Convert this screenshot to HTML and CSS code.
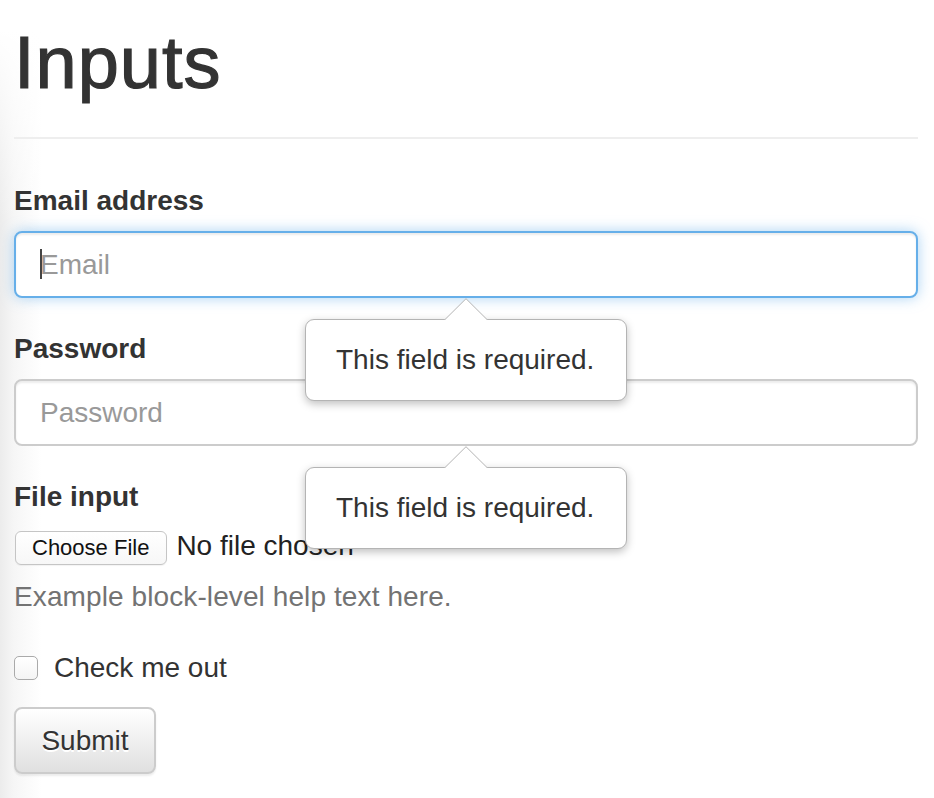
FILE: index.html
```html
<!DOCTYPE html>
<html lang="en">
<head>
<meta charset="utf-8">
<title>Inputs</title>
<link rel="stylesheet" href="styles.css">
</head>
<body>
<div class="page">
  <h1 class="title">Inputs</h1>
  <hr class="divider">
  <form class="form">
    <div class="form-group">
      <label class="label" for="email">Email address</label>
      <div class="field">
        <input class="control control-focus" id="email" type="email" placeholder="Email">
        <span class="caret"></span>
        <div class="bubble">
          <svg class="bubble-arrow" width="44" height="22" viewBox="0 0 44 22"><path d="M0.5 22 L22 0.7 L43.5 22" fill="#fff" stroke="#b4b4b4" stroke-width="1"/></svg>
          <span class="bubble-text">This field is required.</span>
        </div>
      </div>
    </div>
    <div class="form-group">
      <label class="label" for="password">Password</label>
      <div class="field">
        <input class="control" id="password" type="password" placeholder="Password">
        <div class="bubble">
          <svg class="bubble-arrow" width="44" height="22" viewBox="0 0 44 22"><path d="M0.5 22 L22 0.7 L43.5 22" fill="#fff" stroke="#b4b4b4" stroke-width="1"/></svg>
          <span class="bubble-text">This field is required.</span>
        </div>
      </div>
    </div>
    <div class="form-group">
      <label class="label">File input</label>
      <div class="file-row">
        <button type="button" class="file-btn">Choose File</button>
        <span class="file-name">No file chosen</span>
      </div>
      <p class="help">Example block-level help text here.</p>
    </div>
    <div class="check">
      <span class="check-box"></span>
      <span class="check-text">Check me out</span>
    </div>
    <button type="button" class="submit">Submit</button>
  </form>
</div>
</body>
</html>
```
FILE: styles.css
```css
html, body {
  margin: 0;
  padding: 0;
}
body {
  font-family: "Liberation Sans", Arial, sans-serif;
  color: #333;
  background:
    linear-gradient(to bottom, #fff 30px, rgba(255,255,255,0) 220px) no-repeat,
    linear-gradient(to right, #ececec 0px, #f6f6f6 14px, #fff 42px);
  background-size: 100% 220px, 100% 100%;
  min-height: 798px;
}
.page {
  padding: 0 16px 0 14px;
}
.title {
  margin: 22px 0 0 0;
  font-size: 74px;
  line-height: 81px;
  font-weight: normal;
  color: #333;
  letter-spacing: 1px;
  -webkit-text-stroke: 1.2px #333;
}
.divider {
  margin: 34px 0 0 0;
  border: 0;
  border-top: 2px solid #eee;
  height: 0;
}
.form {
  padding-top: 42px;
}
.form-group {
  margin-bottom: 31px;
}
.label {
  display: block;
  font-size: 28px;
  line-height: 40px;
  font-weight: bold;
  margin-bottom: 10px;
}
.field {
  position: relative;
}
.control {
  display: block;
  box-sizing: border-box;
  width: 100%;
  height: 67px;
  margin: 0;
  padding: 0 24px;
  font-family: "Liberation Sans", Arial, sans-serif;
  font-size: 28px;
  color: #555;
  background: #fff;
  border: 2px solid #ccc;
  border-radius: 8px;
  box-shadow: inset 0 2px 2px rgba(0,0,0,.075);
  outline: none;
}
.control::placeholder {
  color: #999;
}
.control-focus {
  border-color: #66afe9;
  box-shadow: inset 0 2px 2px rgba(0,0,0,.075), 0 0 14px rgba(102,175,233,.55);
}
.caret {
  position: absolute;
  left: 26px;
  top: 18px;
  width: 2px;
  height: 30px;
  background: #444;
}
.bubble {
  position: absolute;
  z-index: 5;
  left: 291px;
  top: 88px;
  box-sizing: border-box;
  width: 322px;
  height: 82px;
  padding: 0 30px;
  display: flex;
  align-items: center;
  background: #fff;
  border: 1px solid #b4b4b4;
  border-radius: 9px;
  box-shadow: 0 3px 9px rgba(0,0,0,.25);
}
.bubble-arrow {
  position: absolute;
  left: 138px;
  top: -22px;
  display: block;
}
.bubble-text {
  font-size: 28px;
  color: #333;
  white-space: nowrap;
}
.file-row {
  display: flex;
  align-items: baseline;
  height: 40px;
  padding-top: 3px;
  box-sizing: border-box;
}
.file-btn {
  box-sizing: border-box;
  height: 34px;
  padding: 0 17px 0 16px;
  margin: 0 0 0 1px;
  font-family: "Liberation Sans", Arial, sans-serif;
  font-size: 22px;
  color: #111;
  background: linear-gradient(#fff, #f7f7f7);
  border: 1px solid #c5c5c5;
  border-radius: 6px;
  box-shadow: 0 1px 1px rgba(0,0,0,.05);
}
.file-name {
  margin-left: 9px;
  font-size: 28px;
  color: #222;
}
.help {
  margin: 10px 0 0 0;
  font-size: 28px;
  line-height: 40px;
  color: #737373;
  letter-spacing: 0.1px;
}
.check {
  display: flex;
  align-items: center;
  height: 40px;
  margin-bottom: 19px;
}
.check-box {
  box-sizing: border-box;
  width: 24px;
  height: 24px;
  border: 1px solid #aaa;
  border-radius: 5px;
  background: linear-gradient(#fff, #f4f4f4);
}
.check-text {
  margin-left: 16px;
  font-size: 28px;
}
.submit {
  box-sizing: border-box;
  width: 142px;
  height: 67px;
  margin: 0;
  padding: 0;
  font-family: "Liberation Sans", Arial, sans-serif;
  font-size: 28px;
  color: #333;
  text-shadow: 0 2px 0 #fff;
  background: linear-gradient(to bottom, #fff 0%, #e0e0e0 100%);
  border: 2px solid #ccc;
  border-radius: 8px;
  box-shadow: inset 0 2px 0 rgba(255,255,255,.15), 0 2px 2px rgba(0,0,0,.075);
}
```
